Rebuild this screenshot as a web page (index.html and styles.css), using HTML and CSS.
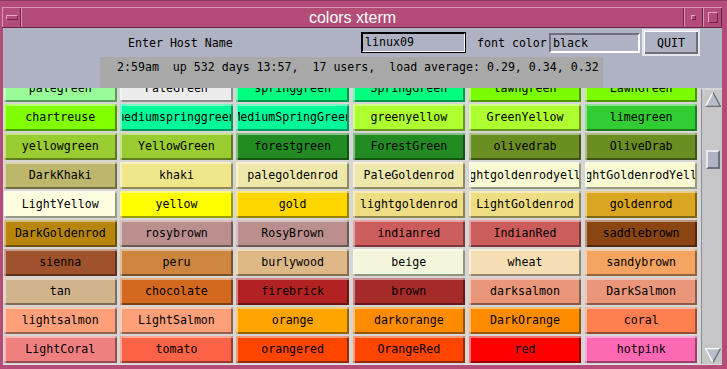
FILE: index.html
```html
<!DOCTYPE html>
<html lang="en">
<head>
    <meta charset="UTF-8">
    <title>colors xterm</title>
    <link rel="stylesheet" href="styles.css">
</head>
<body>
    <div class="window">
        <!-- window manager title bar -->
        <div class="titlebar">
            <div class="tb-btn tb-menu"><span class="menu-bar"></span></div>
            <div class="tb-title">colors xterm</div>
            <div class="tb-btn tb-min"><span class="min-dot"></span></div>
            <div class="tb-btn tb-max"><span class="max-box"></span></div>
        </div>

        <div class="client">
            <div class="header">
                <div class="host-row">
                    <span class="label host-label">Enter Host Name</span>
                    <div class="entry entry-host">linux09</div>
                    <span class="label font-label">font color</span>
                    <div class="entry entry-font">black</div>
                    <div class="quit"><span>QUIT</span></div>
                </div>
                <div class="status">2:59am  up 532 days 13:57,  17 users,  load average: 0.29, 0.34, 0.32</div>
            </div>

            <div class="body">
                <div class="viewport">
                    <div class="grid">
                        <div class="cell" style="--c:#98fb98"><span>palegreen</span></div>
                        <div class="cell" style="--c:#ececec"><span>PaleGreen</span></div>
                        <div class="cell" style="--c:#00ff7f"><span>springgreen</span></div>
                        <div class="cell" style="--c:#00ff7f"><span>SpringGreen</span></div>
                        <div class="cell" style="--c:#7cfc00"><span>lawngreen</span></div>
                        <div class="cell" style="--c:#7cfc00"><span>LawnGreen</span></div>

                        <div class="cell" style="--c:#7fff00"><span>chartreuse</span></div>
                        <div class="cell" style="--c:#00fa9a"><span>mediumspringgreen</span></div>
                        <div class="cell" style="--c:#00fa9a"><span>MediumSpringGreen</span></div>
                        <div class="cell" style="--c:#adff2f"><span>greenyellow</span></div>
                        <div class="cell" style="--c:#adff2f"><span>GreenYellow</span></div>
                        <div class="cell" style="--c:#32cd32"><span>limegreen</span></div>

                        <div class="cell" style="--c:#9acd32"><span>yellowgreen</span></div>
                        <div class="cell" style="--c:#9acd32"><span>YellowGreen</span></div>
                        <div class="cell" style="--c:#228b22"><span>forestgreen</span></div>
                        <div class="cell" style="--c:#228b22"><span>ForestGreen</span></div>
                        <div class="cell" style="--c:#6b8e23"><span>olivedrab</span></div>
                        <div class="cell" style="--c:#6b8e23"><span>OliveDrab</span></div>

                        <div class="cell" style="--c:#bdb76b"><span>DarkKhaki</span></div>
                        <div class="cell" style="--c:#f0e68c"><span>khaki</span></div>
                        <div class="cell" style="--c:#eee8aa"><span>palegoldenrod</span></div>
                        <div class="cell" style="--c:#eee8aa"><span>PaleGoldenrod</span></div>
                        <div class="cell" style="--c:#fafad2"><span>lightgoldenrodyellow</span></div>
                        <div class="cell" style="--c:#fafad2"><span>LightGoldenrodYellow</span></div>

                        <div class="cell" style="--c:#ffffe0"><span>LightYellow</span></div>
                        <div class="cell" style="--c:#ffff00"><span>yellow</span></div>
                        <div class="cell" style="--c:#ffd700"><span>gold</span></div>
                        <div class="cell" style="--c:#eedd82"><span>lightgoldenrod</span></div>
                        <div class="cell" style="--c:#eedd82"><span>LightGoldenrod</span></div>
                        <div class="cell" style="--c:#daa520"><span>goldenrod</span></div>

                        <div class="cell" style="--c:#b8860b"><span>DarkGoldenrod</span></div>
                        <div class="cell" style="--c:#bc8f8f"><span>rosybrown</span></div>
                        <div class="cell" style="--c:#bc8f8f"><span>RosyBrown</span></div>
                        <div class="cell" style="--c:#cd5c5c"><span>indianred</span></div>
                        <div class="cell" style="--c:#cd5c5c"><span>IndianRed</span></div>
                        <div class="cell" style="--c:#8b4513"><span>saddlebrown</span></div>

                        <div class="cell" style="--c:#a0522d"><span>sienna</span></div>
                        <div class="cell" style="--c:#cd853f"><span>peru</span></div>
                        <div class="cell" style="--c:#deb887"><span>burlywood</span></div>
                        <div class="cell" style="--c:#f5f5dc"><span>beige</span></div>
                        <div class="cell" style="--c:#f5deb3"><span>wheat</span></div>
                        <div class="cell" style="--c:#f4a460"><span>sandybrown</span></div>

                        <div class="cell" style="--c:#d2b48c"><span>tan</span></div>
                        <div class="cell" style="--c:#d2691e"><span>chocolate</span></div>
                        <div class="cell" style="--c:#b22222"><span>firebrick</span></div>
                        <div class="cell" style="--c:#a52a2a"><span>brown</span></div>
                        <div class="cell" style="--c:#e9967a"><span>darksalmon</span></div>
                        <div class="cell" style="--c:#e9967a"><span>DarkSalmon</span></div>

                        <div class="cell" style="--c:#ffa07a"><span>lightsalmon</span></div>
                        <div class="cell" style="--c:#ffa07a"><span>LightSalmon</span></div>
                        <div class="cell" style="--c:#ffa500"><span>orange</span></div>
                        <div class="cell" style="--c:#ff8c00"><span>darkorange</span></div>
                        <div class="cell" style="--c:#ff8c00"><span>DarkOrange</span></div>
                        <div class="cell" style="--c:#ff7f50"><span>coral</span></div>

                        <div class="cell" style="--c:#f08080"><span>LightCoral</span></div>
                        <div class="cell" style="--c:#ff6347"><span>tomato</span></div>
                        <div class="cell" style="--c:#ff4500"><span>orangered</span></div>
                        <div class="cell" style="--c:#ff4500"><span>OrangeRed</span></div>
                        <div class="cell" style="--c:#ff0000"><span>red</span></div>
                        <div class="cell" style="--c:#ff69b4"><span>hotpink</span></div>

                        <div class="cell" style="--c:#ff69b4"><span>HotPink</span></div>
                        <div class="cell" style="--c:#ff1493"><span>deeppink</span></div>
                        <div class="cell" style="--c:#ff1493"><span>DeepPink</span></div>
                        <div class="cell" style="--c:#ffc0cb"><span>pink</span></div>
                        <div class="cell" style="--c:#ffc0cb"><span>Pink</span></div>
                        <div class="cell" style="--c:#ffb6c1"><span>lightpink</span></div>
                    </div>
                </div>

                <!-- vertical scrollbar -->
                <div class="scrollbar">
                    <svg class="arrow" width="16" height="15" viewBox="0 0 16 15">
                        <polygon points="8,0.5 0.5,14.5 15.5,14.5" fill="#b9bcc9"/>
                        <polyline points="0.5,14.5 8,0.5" fill="none" stroke="#ffffff" stroke-width="1.4"/>
                        <polyline points="8,0.5 15.5,14.5 0.5,14.5" fill="none" stroke="#6c6c74" stroke-width="1.4"/>
                    </svg>
                    <div class="slider"></div>
                    <svg class="arrow arrow-down" width="16" height="15" viewBox="0 0 16 15">
                        <polygon points="0.5,0.5 15.5,0.5 8,14.5" fill="#b9bcc9"/>
                        <polyline points="15.5,0.5 0.5,0.5 8,14.5" fill="none" stroke="#ffffff" stroke-width="1.4"/>
                        <polyline points="8,14.5 15.5,0.5" fill="none" stroke="#6c6c74" stroke-width="1.4"/>
                    </svg>
                </div>
            </div>
        </div>
    </div>
</body>
</html>
```

FILE: styles.css
```css
body {
    margin: 0;
    width: 727px;
    height: 369px;
    overflow: hidden;
    background-color: #b34d78;
}

.window {
    box-sizing: border-box;
    width: 727px;
    height: 369px;
    padding: 6px 5px 4px 3px;
    background-color: #b34d78;
    border-top: 1px solid #8c3a5e;
    display: flex;
    flex-direction: column;
    overflow: hidden;
}

/* title bar */
.titlebar {
    flex: none;
    display: flex;
    height: 19px;
    margin-left: -1px;
    border-top: 1px solid #dc94b6;
    border-bottom: 1px solid #6e2346;
}
.tb-btn {
    box-sizing: border-box;
    width: 19px;
    display: flex;
    align-items: center;
    justify-content: center;
    border-left: 1px solid #dc94b6;
    border-right: 1px solid #6e2346;
}
.tb-title {
    flex: 1;
    text-align: center;
    color: #ffffff;
    font-family: "Liberation Sans", Arial, sans-serif;
    font-size: 16px;
    line-height: 19px;
    border-left: 1px solid #dc94b6;
    border-right: 1px solid #6e2346;
}
.menu-bar {
    width: 10px;
    height: 3px;
    border-top: 1px solid #e6a8c4;
    border-left: 1px solid #e6a8c4;
    border-bottom: 1px solid #6e2346;
    border-right: 1px solid #6e2346;
}
.min-dot {
    width: 3px;
    height: 3px;
    border-top: 1px solid #e6a8c4;
    border-left: 1px solid #e6a8c4;
    border-bottom: 1px solid #6e2346;
    border-right: 1px solid #6e2346;
}
.max-box {
    width: 8px;
    height: 9px;
    border-top: 1px solid #e6a8c4;
    border-left: 1px solid #e6a8c4;
    border-bottom: 1px solid #6e2346;
    border-right: 1px solid #6e2346;
}

/* client area */
.client {
    flex: 1;
    min-height: 0;
    overflow: hidden;
    display: flex;
    flex-direction: column;
    background-color: #aeb2c2;
    font-family: "DejaVu Sans Mono", "Liberation Mono", monospace;
    font-size: 11.6px;
    color: #000000;
}
.header {
    flex: none;
    height: 60px;
}
.host-row {
    display: flex;
    align-items: center;
    height: 27px;
    margin-top: 1px;
}
.host-label {
    margin-left: 125px;
    width: 233px;
}
.entry {
    box-sizing: border-box;
    height: 20px;
    line-height: 16px;
    padding-left: 2px;
    border: 2px solid;
    border-color: #6e7080 #ffffff #ffffff #6e7080;
}
.entry-host {
    width: 105px;
    height: 21px;
    border-color: #000000 #ffffff #ffffff #000000;
    outline: 1px solid #000000;
    outline-offset: -1px;
}
.font-label {
    margin-left: 11px;
    width: 72px;
}
.entry-font {
    width: 91px;
}
.quit {
    box-sizing: border-box;
    width: 58px;
    height: 27px;
    margin-left: 2px;
    border: 2px solid #e4e6ee;
    display: flex;
}
.quit span {
    flex: 1;
    display: flex;
    align-items: center;
    justify-content: center;
    box-shadow: inset 1px 1px 0 #ffffff, inset -2px -2px 0 #6c6e7a;
}
.status {
    width: 503px;
    height: 31px;
    margin-left: 97px;
    margin-top: 1px;
    box-sizing: border-box;
    padding: 3px 0 0 17px;
    line-height: 14px;
    white-space: pre;
    background-color: #a9a9a9;
}

/* colour grid and scrollbar */
.body {
    flex: 1;
    min-height: 0;
    display: flex;
    border-bottom: 1px solid #e2e2e6;
}
.viewport {
    width: 698px;
    overflow: hidden;
    background-color: #d6d6d6;
}
.grid {
    display: grid;
    grid-template-columns: repeat(6, 112.5px);
    grid-auto-rows: 26.5px;
    column-gap: 3.7px;
    row-gap: 2.5px;
    padding: 1px 0 0 1px;
    margin-top: -14px;
}
.cell {
    background-color: var(--c);
    box-shadow: inset 2px 2px 0 rgba(255, 255, 255, 0.45), inset -2px -2px 0 rgba(0, 0, 0, 0.4);
    padding: 2px;
    display: flex;
    overflow: hidden;
}
.cell span {
    flex: 1;
    display: flex;
    align-items: center;
    justify-content: center;
    white-space: nowrap;
    overflow: hidden;
}
.scrollbar {
    box-sizing: border-box;
    width: 21px;
    display: flex;
    flex-direction: column;
    align-items: center;
    padding: 2px 0 1px 1px;
    background-color: #c6c6c8;
    border-left: 1px solid #8c8c94;
    border-top: 2px solid #d6d6d6;
}
.slider {
    box-sizing: border-box;
    width: 14px;
    height: 19px;
    margin-top: 43px;
    background-color: #aeb2c2;
    border: 2px solid;
    border-color: #e6e8f0 #6c6e7a #6c6e7a #e6e8f0;
}
.arrow-down {
    margin-top: auto;
}
```
